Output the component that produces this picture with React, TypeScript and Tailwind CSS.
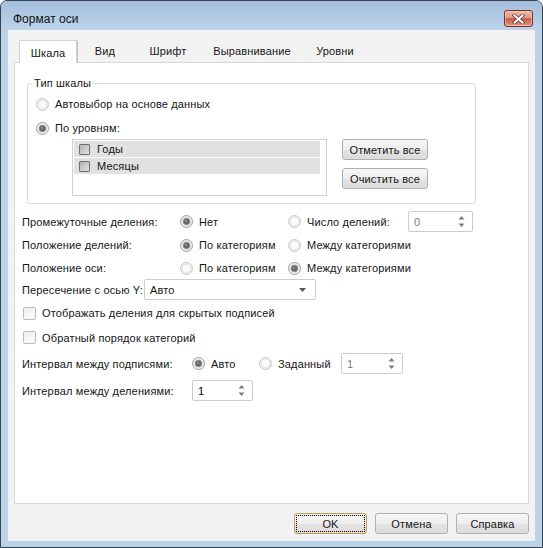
import React from "react";

const font = { fontFamily: '"Liberation Sans", Arial, sans-serif' };

function Radio({ checked }: { checked?: boolean }) {
  return (
    <svg width="13" height="13" viewBox="0 0 13 13" className="shrink-0">
      <circle cx="6.5" cy="6.5" r="6" fill="#f3f3f3" stroke={checked ? "#9b9b9b" : "#c6c6c6"} />
      <circle cx="6.5" cy="6.5" r="4.4" fill="#fbfbfb" stroke="#e2e2e2" strokeWidth="1" />
      {checked && (
        <>
          <circle cx="6.5" cy="6.5" r="3.3" fill="#666666" stroke="#8c8c8c" strokeWidth="0.8" />
          <circle cx="6" cy="6" r="1.2" fill="#909090" />
        </>
      )}
    </svg>
  );
}

function RadioLabel({ checked, children }: { checked?: boolean; children: React.ReactNode }) {
  return (
    <div className="flex items-center gap-[6px] whitespace-nowrap">
      <Radio checked={checked} />
      <span>{children}</span>
    </div>
  );
}

function CheckBox() {
  return (
    <span className="w-[13px] h-[13px] shrink-0 rounded-[2px] border border-[#bcbcbc] bg-gradient-to-br from-[#ececec] to-white shadow-[inset_0_0_0_1px_#f4f4f4]" />
  );
}

function ListCheck() {
  return (
    <span className="w-[11px] h-[11px] shrink-0 rounded-[1px] border border-[#6f6f6f] bg-gradient-to-br from-[#b3b3b3] to-[#e2e2e2]" />
  );
}

function Spin({ value, width, muted }: { value: string; width: string; muted?: boolean }) {
  return (
    <div
      className={`${width} h-[21px] shrink-0 rounded-[2px] border border-[#cbcbcb] bg-white flex items-center justify-between pl-[5px] pr-[7px]`}
    >
      <span className={muted ? "text-[#7a7a7a]" : "text-black"}>{value}</span>
      <svg width="7" height="13" viewBox="0 0 7 13">
        <path d="M3.5 1 L6.5 4.5 L0.5 4.5 Z" fill="#7d7d7d" />
        <path d="M3.5 12 L6.5 8.5 L0.5 8.5 Z" fill="#7d7d7d" />
      </svg>
    </div>
  );
}

function Button({ children, width, isDefault }: { children: React.ReactNode; width: string; isDefault?: boolean }) {
  return (
    <div
      className={`${width} h-[21px] shrink-0 rounded-[3px] border flex items-center justify-center bg-[linear-gradient(#f7f7f7_0%,#eeeeee_50%,#e4e4e4_51%,#dcdcdc_100%)] ${
        isDefault
          ? "border-[#c99a55] outline-1 outline-dotted outline-black -outline-offset-[3px]"
          : "border-[#afafaf]"
      }`}
    >
      {children}
    </div>
  );
}

export default function App() {
  return (
    <div
      style={font}
      className="w-[543px] h-[548px] flex flex-col border border-[#39434f] rounded-t-[7px] bg-[#bad2ea] text-[11px] tracking-[0.15px] leading-[14px] text-[#161616] whitespace-nowrap overflow-hidden"
    >
      {/* caption */}
      <div className="h-[29px] shrink-0 flex items-start justify-between pl-[12px] pr-[9px] bg-[linear-gradient(#a3bedb,#bdd4eb)]">
        <span className="mt-[11px] text-[12px] tracking-normal text-[#111]">Формат оси</span>
        <div className="mt-[9px] w-[29px] h-[17px] rounded-[3px] border border-[#7a2f26] flex items-center justify-center bg-[linear-gradient(#edb7a9_0%,#e09a88_44%,#c4553d_52%,#cd6a52_62%,#e29a87_100%)] shadow-[inset_0_0_0_1px_rgba(255,220,210,0.5)]">
          <svg width="13" height="10" viewBox="0 0 13 10">
            <path d="M2.5 1.5 L10.5 8.5 M10.5 1.5 L2.5 8.5" stroke="#5a3a38" strokeWidth="3.6" strokeLinecap="square" />
            <path d="M2.5 1.5 L10.5 8.5 M10.5 1.5 L2.5 8.5" stroke="#ffffff" strokeWidth="2" strokeLinecap="square" />
          </svg>
        </div>
      </div>

      {/* client area */}
      <div className="mx-[7px] h-[511px] shrink-0 bg-[#f2f2f2] flex flex-col pt-[10px]">
        {/* tabs */}
        <div className="h-[22px] flex items-end ml-[11px] relative z-10">
          <div className="w-[58px] h-[23px] -mb-px bg-white border-x border-t border-[#d0d0d0] rounded-t-[2px] shadow-[1px_0_0_#c4c4c4] flex items-center justify-center pt-[1px]">
            Шкала
          </div>
          <div className="w-[56px] h-[22px] flex items-center justify-center">Вид</div>
          <div className="w-[70px] h-[22px] flex items-center justify-center">Шрифт</div>
          <div className="w-[98px] h-[22px] flex items-center justify-center">Выравнивание</div>
          <div className="w-[68px] h-[22px] flex items-center justify-center">Уровни</div>
        </div>

        {/* tab page */}
        <div className="mx-[6px] h-[442px] shrink-0 border border-[#d9d9d9] bg-white pt-[13px] flex flex-col">
          <fieldset className="ml-[12px] w-[449px] border border-[#d5dde3] rounded-[3px] pl-[8px] pb-[7px] pt-[6px]">
            <legend className="ml-[-4px] px-[2px] leading-[14px]">Тип шкалы</legend>
            <div className="h-[16px] flex items-center">
              <RadioLabel>Автовыбор на основе данных</RadioLabel>
            </div>
            <div className="h-[16px] mt-[8px] flex items-center">
              <RadioLabel checked>По уровням:</RadioLabel>
            </div>
            <div className="mt-[3px] ml-[36px] flex">
              <div className="w-[255px] h-[57px] border border-[#cfcfcf] bg-white pl-[1px] pt-[1px]">
                <div className="w-[246px] h-[16px] bg-[#e1e1e1] flex items-center pl-[5px] gap-[7px]">
                  <ListCheck />
                  <span>Годы</span>
                </div>
                <div className="w-[246px] h-[16px] mt-[1px] bg-[#e1e1e1] flex items-center pl-[5px] gap-[7px]">
                  <ListCheck />
                  <span>Месяцы</span>
                </div>
              </div>
              <div className="ml-[15px] flex flex-col gap-[8px]">
                <Button width="w-[86px]">Отметить все</Button>
                <Button width="w-[86px]">Очистить все</Button>
              </div>
            </div>
          </fieldset>

          <div className="pl-[7px] flex flex-col">
            <div className="mt-[7px] h-[21px] flex items-center">
              <span className="w-[158px] shrink-0">Промежуточные деления:</span>
              <div className="w-[108px] shrink-0">
                <RadioLabel checked>Нет</RadioLabel>
              </div>
              <div className="w-[120px] shrink-0">
                <RadioLabel>Число делений:</RadioLabel>
              </div>
              <Spin value="0" width="w-[65px]" muted />
            </div>

            <div className="mt-[1px] h-[24px] flex items-center">
              <span className="w-[158px] shrink-0">Положение делений:</span>
              <div className="w-[108px] shrink-0">
                <RadioLabel checked>По категориям</RadioLabel>
              </div>
              <RadioLabel>Между категориями</RadioLabel>
            </div>

            <div className="h-[22px] flex items-center">
              <span className="w-[158px] shrink-0">Положение оси:</span>
              <div className="w-[108px] shrink-0">
                <RadioLabel>По категориям</RadioLabel>
              </div>
              <RadioLabel checked>Между категориями</RadioLabel>
            </div>

            <div className="h-[21px] flex items-center">
              <span className="w-[122px] shrink-0">Пересечение с осью Y:</span>
              <div className="w-[172px] h-[21px] rounded-[2px] border border-[#cbcbcb] bg-white flex items-center justify-between pl-[5px] pr-[9px]">
                <span>Авто</span>
                <svg width="7" height="4" viewBox="0 0 7 4">
                  <path d="M0 0 L7 0 L3.5 4 Z" fill="#555" />
                </svg>
              </div>
            </div>

            <div className="h-[26px] flex items-center gap-[6px] pl-[1px]">
              <CheckBox />
              <span>Отображать деления для скрытых подписей</span>
            </div>

            <div className="h-[23px] flex items-center gap-[6px] pl-[1px]">
              <CheckBox />
              <span>Обратный порядок категорий</span>
            </div>

            <div className="mt-[4px] h-[21px] flex items-center">
              <span className="w-[170px] shrink-0">Интервал между подписями:</span>
              <div className="w-[67px] shrink-0">
                <RadioLabel checked>Авто</RadioLabel>
              </div>
              <div className="w-[82px] shrink-0">
                <RadioLabel>Заданный</RadioLabel>
              </div>
              <Spin value="1" width="w-[62px]" muted />
            </div>

            <div className="mt-[6px] h-[21px] flex items-center">
              <span className="w-[170px] shrink-0">Интервал между делениями:</span>
              <Spin value="1" width="w-[61px]" />
            </div>
          </div>
        </div>

        {/* dialog buttons */}
        <div className="mt-[9px] flex justify-end gap-[8px] pr-[6px]">
          <Button width="w-[73px]" isDefault>
            OK
          </Button>
          <Button width="w-[73px]">Отмена</Button>
          <Button width="w-[73px]">Справка</Button>
        </div>
      </div>
    </div>
  );
}
